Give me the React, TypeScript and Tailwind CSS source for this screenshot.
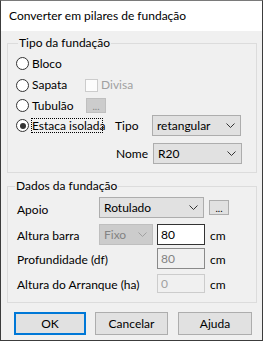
import React from "react";

const font = { fontFamily: 'Lato, "Noto Sans", sans-serif' };

function Chevron({ color = "#333" }: { color?: string }) {
  return (
    <svg width="9" height="5" viewBox="0 0 9 5" className="shrink-0">
      <path d="M0.5 0.5 L4.5 4.5 L8.5 0.5" fill="none" stroke={color} strokeWidth="1" />
    </svg>
  );
}

function Radio({ checked = false }: { checked?: boolean }) {
  return (
    <span className="w-[13px] h-[13px] rounded-full border border-[#333333] bg-white flex items-center justify-center shrink-0">
      {checked && <span className="w-[6px] h-[6px] rounded-full bg-[#333333]" />}
    </span>
  );
}

function Combo({ text, w, disabled = false }: { text: string; w: string; disabled?: boolean }) {
  return (
    <div
      className={`${w} h-[21px] border flex items-center justify-between pl-[4px] pr-[5px] shrink-0 ${
        disabled ? "bg-[#cccccc] border-[#bfbfbf] text-[#838383]" : "bg-[#e1e1e1] border-[#adadad] text-black"
      }`}
    >
      <span>{text}</span>
      <Chevron color={disabled ? "#a0a0a0" : "#333"} />
    </div>
  );
}

export default function App() {
  return (
    <div
      className="w-[263px] h-[341px] bg-[#f0f0f0] border-t border-t-[#7a7a7a] border-l border-l-[#3c3c3c] border-r border-r-[#3c3c3c] border-b border-b-[#3c3c3c] flex flex-col text-[12px] leading-[16px] text-black select-none whitespace-nowrap"
      style={font}
    >
      <div className="h-[30px] bg-white flex items-center pl-[8px] text-[12px] shrink-0">
        Converter em pilares de fundação
      </div>

      <div className="flex flex-col pl-[6px] pr-[5px]">
        {/* Group 1 */}
        <div className="relative mt-[12px] h-[130px] border border-[#dcdcdc] flex flex-col pt-[9px]">
          <span className="absolute -top-[9px] left-[10px] px-[1px] bg-[#f0f0f0]">Tipo da fundação</span>

          <div className="h-[21px] flex items-center pl-[8px]">
            <Radio />
            <span className="ml-[3px]">Bloco</span>
          </div>

          <div className="h-[22px] flex items-center pl-[8px]">
            <Radio />
            <span className="ml-[3px] w-[53px]">Sapata</span>
            <span className="w-[13px] h-[13px] border border-[#cccccc] bg-[#fcfcfc] shrink-0" />
            <span className="ml-[3px] text-[#a0a0a0]">Divisa</span>
          </div>

          <div className="h-[19px] flex items-center pl-[8px]">
            <Radio />
            <span className="ml-[3px] w-[54px]">Tubulão</span>
            <span className="w-[20px] h-[15px] border border-[#bfbfbf] bg-[#cccccc] text-[#838383] flex items-center justify-center text-[10px] leading-[10px]">
              ...
            </span>
          </div>

          <div className="h-[21px] flex items-center pl-[8px]">
            <Radio checked />
            <span className="ml-[2px] w-[72px] h-[15px] border border-dotted border-black flex items-center shrink-0">
              Estaca isolada
            </span>
            <span className="ml-[12px] w-[37px]">Tipo</span>
            <Combo text="retangular" w="w-[89px]" />
          </div>

          <div className="h-[21px] mt-[7px] flex items-center pl-[108px]">
            <span className="w-[37px]">Nome</span>
            <Combo text="R20" w="w-[89px]" />
          </div>
        </div>

        {/* Group 2 */}
        <div className="relative mt-[13px] h-[117px] border border-[#dcdcdc] flex flex-col pt-[10px] pl-[9px]">
          <span className="absolute -top-[9px] left-[7px] px-[1px] bg-[#f0f0f0]">Dados da fundação</span>

          <div className="h-[21px] flex items-center">
            <span className="w-[82px] mt-[4px]">Apoio</span>
            <Combo text="Rotulado" w="w-[105px]" />
            <span className="ml-[5px] w-[20px] h-[15px] border border-[#adadad] bg-[#e1e1e1] flex items-center justify-center text-[10px] leading-[10px]">
              ...
            </span>
          </div>

          <div className="h-[21px] mt-[6px] flex items-center">
            <span className="w-[82px] mt-[2px]">Altura barra</span>
            <Combo text="Fixo" w="w-[54px]" disabled />
            <span className="ml-[4px] w-[48px] h-[21px] border border-[#333333] bg-white flex items-center pl-[3px]">80</span>
            <span className="ml-[5px] mt-[2px]">cm</span>
          </div>

          <div className="h-[21px] mt-[3px] flex items-center">
            <span className="w-[140px] mt-[2px]">Profundidade (df)</span>
            <span className="w-[48px] h-[21px] border border-[#8a8a8a] bg-[#f0f0f0] text-[#838383] flex items-center pl-[3px]">80</span>
            <span className="ml-[5px] mt-[2px]">cm</span>
          </div>

          <div className="h-[19px] mt-[5px] flex items-center">
            <span className="w-[140px] mt-[2px]">Altura do Arranque (ha)</span>
            <span className="w-[48px] h-[19px] border border-[#cccccc] bg-[#f0f0f0] text-[#a0a0a0] flex items-center pl-[3px]">0</span>
            <span className="ml-[5px] mt-[2px]">cm</span>
          </div>
        </div>

        {/* Buttons */}
        <div className="flex mt-[9px] pl-[7px]">
          <div className="w-[72px] h-[23px] border-2 border-[#0078d7] bg-[#e1e1e1] flex items-center justify-center">OK</div>
          <div className="ml-[9px] w-[73px] h-[23px] border border-[#adadad] bg-[#e1e1e1] flex items-center justify-center">Cancelar</div>
          <div className="ml-[10px] w-[74px] h-[23px] border border-[#adadad] bg-[#e1e1e1] flex items-center justify-center">Ajuda</div>
        </div>
      </div>
    </div>
  );
}
